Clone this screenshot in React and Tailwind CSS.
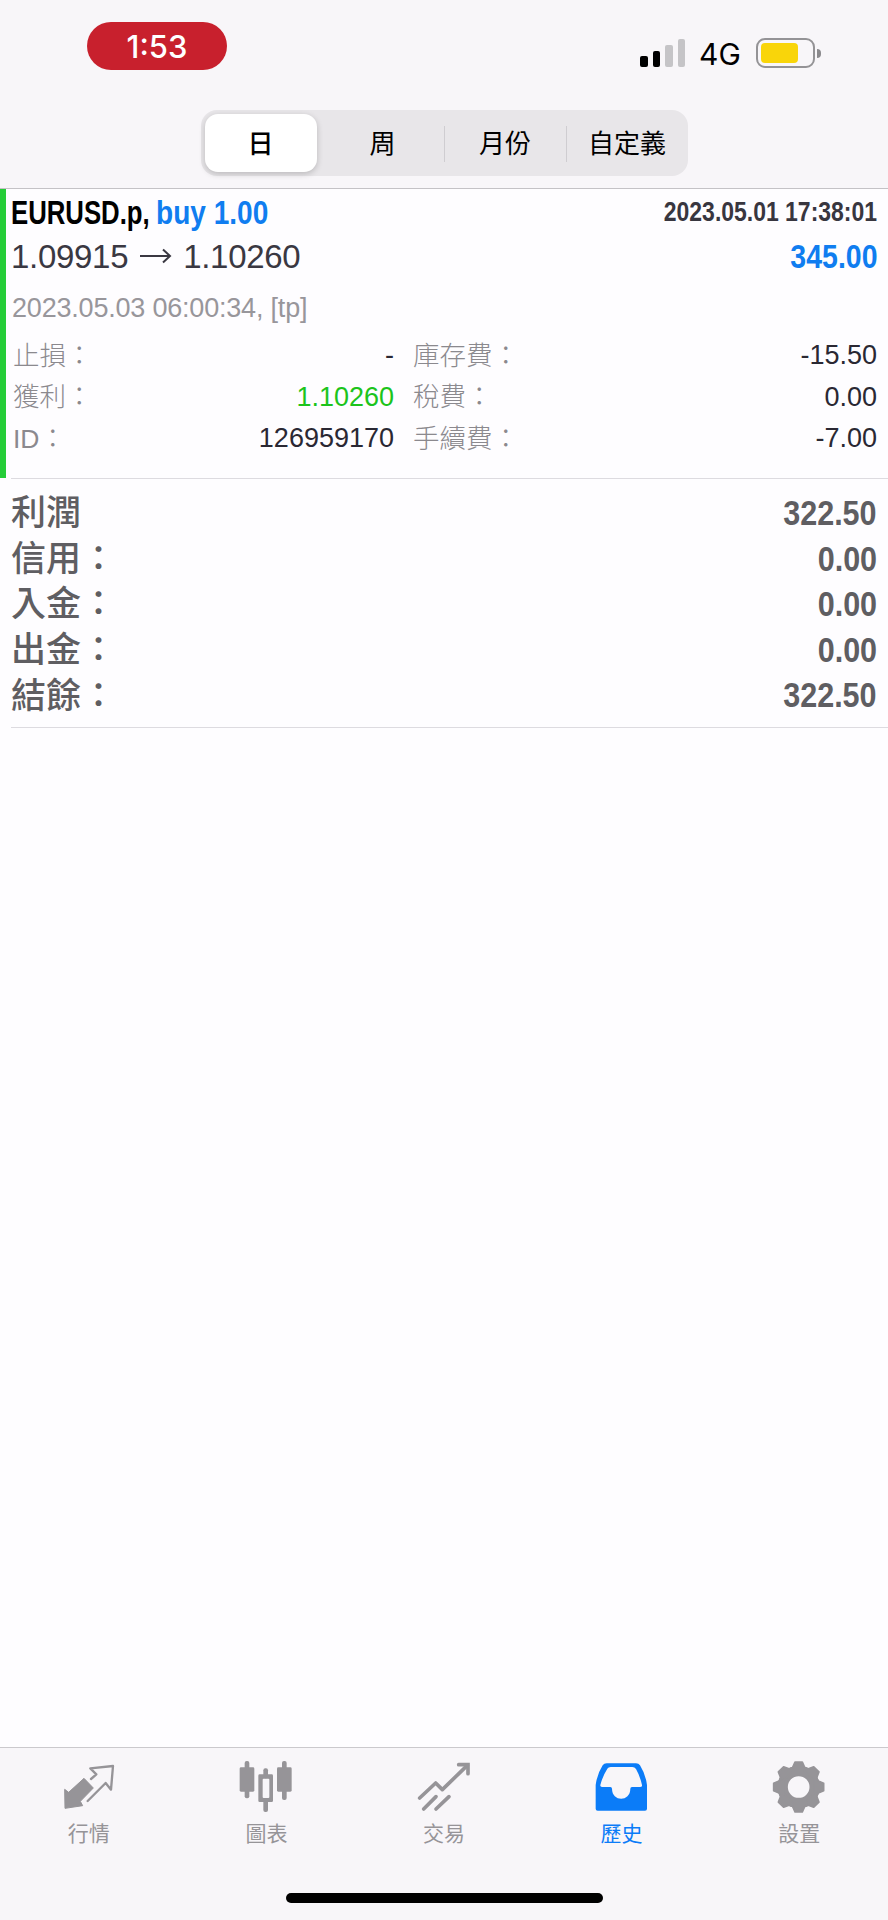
import React, { useState } from 'react';
import clsx from 'clsx';

const PERIODS = ['日', '周', '月份', '自定義'];

const SUMMARY = [
  { label: '利潤', value: '322.50' },
  { label: '信用：', value: '0.00' },
  { label: '入金：', value: '0.00' },
  { label: '出金：', value: '0.00' },
  { label: '結餘：', value: '322.50' },
];

const DETAILS = [
  { label: '止損：', value: '-', feeLabel: '庫存費：', fee: '-15.50' },
  { label: '獲利：', value: '1.10260', feeLabel: '稅費：', fee: '0.00', positive: true },
  { label: 'ID：', value: '126959170', feeLabel: '手續費：', fee: '-7.00' },
];

const QuotesIcon = () => (
  <svg viewBox="62 60 168 168" className="size-14">
    <path d="M73 148L85 157L131 115L159 144L120 184L127 197L74 205Z" fill="currentColor" stroke="currentColor" strokeWidth="3" strokeLinejoin="round" />
    <path d="M152 117L168 103L150 85L218 78L212 149L196 129L142 183" fill="none" stroke="currentColor" strokeWidth="7" strokeLinejoin="round" strokeLinecap="round" />
  </svg>
);

const ChartIcon = () => (
  <svg viewBox="595 60 168 168" className="size-14" fill="currentColor">
    <rect x="615" y="63" width="14" height="112" rx="6" />
    <rect x="600" y="82" width="44" height="73" rx="4" />
    <rect x="727" y="63" width="14" height="117" rx="6" />
    <rect x="712" y="82" width="44" height="73" rx="4" />
    <rect x="671" y="85" width="14" height="30" rx="6" />
    <rect x="671" y="180" width="14" height="36" rx="6" />
    <path fillRule="evenodd" d="M660 103H696Q700 103 700 107V182Q700 186 696 186H660Q656 186 656 182V107Q656 103 660 103ZM672 116Q669 116 669 119V171Q669 174 672 174H686Q689 174 689 171V119Q689 116 686 116Z" />
  </svg>
);

const TradeIcon = () => (
  <svg viewBox="108 60 168 168" className="size-14" fill="none" stroke="currentColor" strokeWidth="11" strokeLinecap="round" strokeLinejoin="round">
    <path d="M119 174L167 129L187 149L262 76" />
    <path d="M236 74H264V101" strokeLinejoin="miter" />
    <path d="M131 207L168 170M168 207L207 170" />
  </svg>
);

const HistoryIcon = () => (
  <svg viewBox="641 60 168 168" className="size-14" fill="currentColor">
    <path fillRule="evenodd" d="M679 70H767Q775 70 779 76Q796 103 800 135V206Q800 212 794 212H652Q646 212 646 206V135Q650 103 667 76Q671 70 679 70ZM691 81Q684 81 681 86Q667 108 660 135Q659 141 665 141H690Q695 141 695 146C695 186 750 186 750 146Q750 141 755 141H779Q786 141 785 135Q779 108 767 87Q763 81 756 81Z" />
  </svg>
);

const GearIcon = () => (
  <svg viewBox="393 60 168 168" className="size-14" fill="currentColor" stroke="currentColor">
    <circle cx="476" cy="141" r="48" fill="none" strokeWidth="31" />
    {[0, 45, 90, 135, 180, 225, 270, 315].map(angle => (
      <path key={angle} d="M465 66H487L494 82L500 86V95H452V86L458 82Z" strokeWidth="5" strokeLinejoin="round" transform={`rotate(${angle} 476 141)`} />
    ))}
  </svg>
);

const TABS = [
  { label: '行情', icon: QuotesIcon },
  { label: '圖表', icon: ChartIcon },
  { label: '交易', icon: TradeIcon },
  { label: '歷史', icon: HistoryIcon },
  { label: '設置', icon: GearIcon },
];

const StatusBar = () => (
  <div className="flex justify-between items-start pl-[87px] pr-[67px] pt-[22px] h-[110px]">
    <div className="flex items-center justify-center w-[140px] h-12 rounded-full bg-[#c8202d] text-white font-['Inter',sans-serif] font-medium text-[31px] leading-none">
      1:53
    </div>
    <div className="flex items-center mt-4 h-[30px]">
      <div className="flex items-end gap-[5px] h-[28px]">
        <span className="w-[7.5px] h-[11px] rounded-[2px] bg-black" />
        <span className="w-[7.5px] h-[16px] rounded-[2px] bg-black" />
        <span className="w-[7.5px] h-[22px] rounded-[2px] bg-[#c5c4c7]" />
        <span className="w-[7.5px] h-[28px] rounded-[2px] bg-[#c5c4c7]" />
      </div>
      <span className="ml-[14px] mt-0.5 w-[57px] font-['Inter',sans-serif] text-[30px] leading-none">4G</span>
      <div className="w-[59px] h-[30px] rounded-[9px] border-2 border-[#949396] p-[3px]">
        <div className="w-[37px] h-5 rounded-[4px] bg-[#f9d50a]" />
      </div>
      <span className="ml-[2px] w-1 h-[9px] rounded-r-full bg-[#8b8a8d]" />
    </div>
  </div>
);

const PeriodTabs = () => {
  const [active, setActive] = useState(0);

  return (
    <div className="flex items-center mx-auto w-[487px] h-[66px] pl-1 rounded-[16px] bg-[#e8e6e9]">
      {PERIODS.map((period, i) => (
        <button
          key={period}
          onClick={() => setActive(i)}
          className={clsx(
            'flex items-center justify-center h-[58px] pt-px text-[26px]',
            i === 0 ? 'w-[112px] mr-[5px]' : 'flex-1',
            active === i ? 'rounded-[13px] bg-white font-medium shadow-[0_2px_6px_rgba(0,0,0,0.2)]' : 'font-normal'
          )}
        >
          {i > 1 && <span className="w-px h-9 bg-[#cfcdd1]" />}
          <span className="flex-1">{period}</span>
        </button>
      ))}
    </div>
  );
};

const TradeCard = () => (
  <section className="flex h-[290px]">
    <div className="w-1.5 mb-px bg-[#25cd38]" />
    <div className="flex-1 pl-[5px] flex flex-col">
      <div className="flex-1 pr-[11px]">
        <div className="flex justify-between items-center h-[46px] font-bold">
          <div className="flex text-[33px] whitespace-nowrap">
            <div className="w-[145px]">
              <span className="inline-block origin-left scale-x-[0.78]">EURUSD.p,</span>
            </div>
            <span className="text-[#107df0] origin-left scale-x-[0.85]">buy 1.00</span>
          </div>
          <div className="text-[28px] text-[#38363f] origin-right scale-x-[0.82] whitespace-nowrap">2023.05.01 17:38:01</div>
        </div>
        <div className="flex justify-between items-center h-[42px]">
          <div className="flex items-center text-[33px] tracking-[-0.3px] text-[#3a3842]">
            1.09915
            <svg viewBox="0 0 32 16" className="w-8 h-4 ml-3 mr-[11px]" fill="none" stroke="currentColor" strokeWidth="2">
              <path d="M0 8H30M23 1.5L30 8L23 14.5" />
            </svg>
            1.10260
          </div>
          <div className="text-[33.5px] pt-px font-bold text-[#107df0] origin-right scale-x-[0.85]">345.00</div>
        </div>
        <div className="flex items-center h-[58px] pl-px pt-[5px] text-[27px] tracking-[-0.2px] text-[#98969b]">
          2023.05.03 06:00:34, [tp]
        </div>
        <div className="text-[27px]">
          {DETAILS.map(row => (
            <div key={row.label} className="flex items-center h-[41.5px] pl-0.5">
              <span className="text-[26.5px] font-light text-[#8b898e]">{row.label}</span>
              <span className={clsx('ml-auto mr-[19px]', row.positive ? 'text-[#1cc41c]' : 'text-[#2a2833]')}>{row.value}</span>
              <span className="flex justify-between items-center w-[464px]">
                <span className="text-[26.5px] font-light text-[#8b898e]">{row.feeLabel}</span>
                <span className="text-[#2a2833]">{row.fee}</span>
              </span>
            </div>
          ))}
        </div>
      </div>
      <div className="h-px bg-[#dddbe0]" />
    </div>
  </section>
);

const Summary = () => (
  <section className="ml-[11px] pt-[11px] h-[249px] border-b border-[#dddbe0] text-[#5f5e62]">
    {SUMMARY.map(row => (
      <div key={row.label} className="flex justify-between items-center h-[45.6px] pr-[11px]">
        <span className="text-[35px] font-medium leading-none">{row.label}</span>
        <span className="pt-0.5 text-[35.5px] font-bold origin-right scale-x-[0.86]">{row.value}</span>
      </div>
    ))}
  </section>
);

const TabBar = () => (
  <nav className="h-[173px] bg-[#f8f6f9] border-t border-[#cbc9cd] flex flex-col">
    <div className="flex pt-3">
      {TABS.map(({ label, icon: Icon }) => (
        <button key={label} className={clsx('flex-1 flex flex-col items-center', label === '歷史' ? 'text-[#0b7cf8]' : 'text-[#969498]')}>
          <Icon />
          <span className="mt-[3px] text-[21px] leading-[30px]">{label}</span>
        </button>
      ))}
    </div>
    <div className="mx-auto mt-auto mb-[17px] w-[317px] h-[10px] rounded-full bg-black" />
  </nav>
);

const App = () => (
  <div className="flex flex-col w-full h-screen overflow-hidden bg-[#fefdff] text-black leading-none font-['Liberation_Sans','Noto_Sans_CJK_TC',sans-serif]">
    <header className="h-[189px] bg-[#f8f6f9] border-b border-[#c4c2c6]">
      <StatusBar />
      <PeriodTabs />
    </header>
    <main className="flex-1">
      <TradeCard />
      <Summary />
    </main>
    <TabBar />
  </div>
);

export default App;
